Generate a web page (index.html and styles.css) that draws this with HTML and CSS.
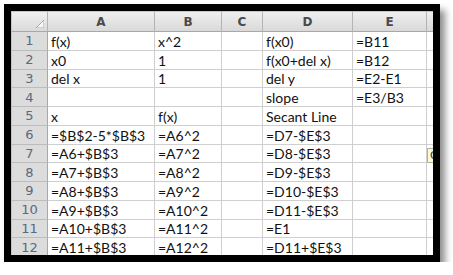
FILE: index.html
```html
<!DOCTYPE html>
<html>
<head>
<meta charset="utf-8">
<link rel="stylesheet" href="styles.css">
</head>
<body>
<div class="frame">
  <div class="sheet">
    <div class="grid">
      <div class="corner"><svg width="8" height="8" viewBox="0 0 8 8"><polygon points="8,0 8,8 0,8" fill="#f6f6f6" stroke="#9a9a9a" stroke-width="0.8"/></svg></div>
      <div class="ch">A</div><div class="ch">B</div><div class="ch">C</div><div class="ch">D</div><div class="ch">E</div><div class="ch last"></div>

      <div class="rh">1</div><div class="c">f(x)</div><div class="c">x^2</div><div class="c"></div><div class="c">f(x0)</div><div class="c">=B11</div><div class="c last"></div>
      <div class="rh">2</div><div class="c">x0</div><div class="c">1</div><div class="c"></div><div class="c">f(x0+del x)</div><div class="c">=B12</div><div class="c last"></div>
      <div class="rh">3</div><div class="c">del x</div><div class="c">1</div><div class="c"></div><div class="c">del y</div><div class="c">=E2-E1</div><div class="c last"></div>
      <div class="rh">4</div><div class="c"></div><div class="c"></div><div class="c"></div><div class="c">slope</div><div class="c">=E3/B3</div><div class="c last"></div>
      <div class="rh">5</div><div class="c">x</div><div class="c">f(x)</div><div class="c"></div><div class="c">Secant Line</div><div class="c"></div><div class="c last"></div>
      <div class="rh">6</div><div class="c">=$B$2-5*$B$3</div><div class="c">=A6^2</div><div class="c"></div><div class="c">=D7-$E$3</div><div class="c"></div><div class="c last"></div>
      <div class="rh">7</div><div class="c">=A6+$B$3</div><div class="c">=A7^2</div><div class="c"></div><div class="c">=D8-$E$3</div><div class="c"></div><div class="c last"></div>
      <div class="rh">8</div><div class="c">=A7+$B$3</div><div class="c">=A8^2</div><div class="c"></div><div class="c">=D9-$E$3</div><div class="c"></div><div class="c last"></div>
      <div class="rh">9</div><div class="c">=A8+$B$3</div><div class="c">=A9^2</div><div class="c"></div><div class="c">=D10-$E$3</div><div class="c"></div><div class="c last"></div>
      <div class="rh">10</div><div class="c">=A9+$B$3</div><div class="c">=A10^2</div><div class="c"></div><div class="c">=D11-$E$3</div><div class="c"></div><div class="c last"></div>
      <div class="rh">11</div><div class="c">=A10+$B$3</div><div class="c">=A11^2</div><div class="c"></div><div class="c">=E1</div><div class="c"></div><div class="c last"></div>
      <div class="rh">12</div><div class="c">=A11+$B$3</div><div class="c">=A12^2</div><div class="c"></div><div class="c">=D11+$E$3</div><div class="c"></div><div class="c last"></div>
    </div>
    <div class="tip">O</div>
  </div>
</div>
</body>
</html>
```

FILE: styles.css
```css
html, body {
  margin: 0;
  padding: 0;
  background: #ffffff;
}
.frame {
  position: relative;
  margin: 4px 0 0 4px;
  width: 436px;
  height: 258px;
  box-sizing: border-box;
  border: 7px solid #000;
  box-shadow: 5px 6px 7px rgba(0, 0, 0, 0.45);
  background: #fff;
}
.sheet {
  position: relative;
  width: 422px;
  height: 244px;
  overflow: hidden;
  background: #fff;
}
.grid {
  display: grid;
  grid-template-columns: 37px 107px 67px 41px 90px 74px 20px;
  grid-template-rows: 21px repeat(12, 18.75px);
}
.grid > div {
  box-sizing: border-box;
  overflow: hidden;
  white-space: nowrap;
}
.corner {
  border-top: 1px solid #c4c4c4;
  border-left: 1px solid #c4c4c4;
  border-right: 1px solid #b4b4b4;
  border-bottom: 1px solid #a8a8a8;
  background: linear-gradient(#f0f0f0, #dadada);
  display: flex;
  align-items: flex-end;
  justify-content: flex-end;
  padding: 0 3px 3px 0;
}
.corner svg { display: block; }
.ch {
  border-top: 1px solid #c4c4c4;
  border-right: 1px solid #b4b4b4;
  border-bottom: 1px solid #a8a8a8;
  background: linear-gradient(#efefef, #d9d9d9);
  font-family: "DejaVu Sans", sans-serif;
  font-weight: bold;
  font-size: 12px;
  color: #4a4a4a;
  display: flex;
  align-items: center;
  justify-content: center;
}
.ch.last { border-right: none; }
.rh {
  border-left: 1px solid #c4c4c4;
  border-right: 1px solid #a8a8a8;
  border-bottom: 1px solid #bcbcbc;
  background: #dcdcdc;
  font-family: "DejaVu Sans", sans-serif;
  font-size: 13px;
  color: #5a6880;
  display: flex;
  align-items: center;
  justify-content: center;
}
.c {
  border-right: 1px solid #cfcfcf;
  border-bottom: 1px solid #cfcfcf;
  font-family: "Lato", sans-serif;
  font-size: 14px;
  color: #111;
  padding-left: 3px;
  display: flex;
  align-items: center;
  padding-top: 1px;
}
.c.last { border-right: none; }
.tip {
  position: absolute;
  left: 416px;
  top: 137px;
  width: 14px;
  height: 15px;
  box-sizing: border-box;
  background: #fbfbd2;
  border: 1px solid #b0b0a0;
  font-family: "DejaVu Sans", sans-serif;
  font-size: 11px;
  line-height: 13px;
  color: #2a3a6a;
  padding-left: 2px;
}
```
